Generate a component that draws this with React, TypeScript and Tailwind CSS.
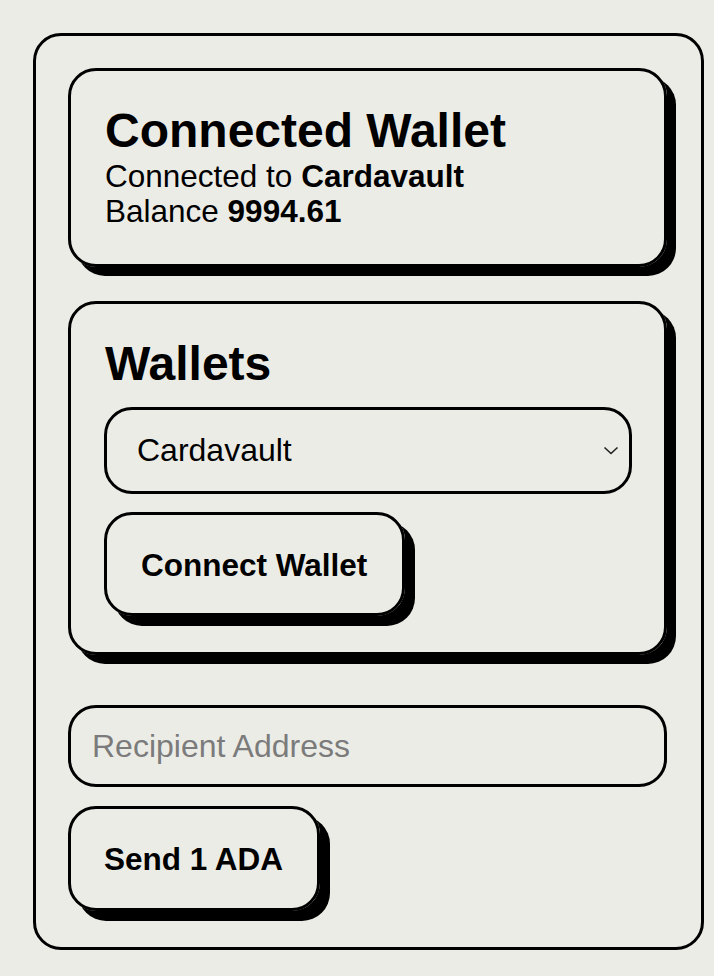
import React from "react";

export default function App() {
  return (
    <div
      className="min-h-[976px] w-full bg-[#ecece7] pt-[33px] pl-[33px] text-black"
      style={{ fontFamily: '"Liberation Sans", Arial, Helvetica, sans-serif' }}
    >
      <div className="w-[671px] h-[917px] rounded-[28px] border-[3px] border-black pt-[32px] pl-[32px] pr-[34px] flex flex-col">
        {/* Connected wallet card */}
        <div className="rounded-[28px] border-[3px] border-black shadow-[9px_9px_0_0_#000] pt-[32px] pb-[35px] pl-[34px] pr-[32px]">
          <h2 className="text-[48px] leading-[56px] font-bold">Connected Wallet</h2>
          <div className="text-[31.5px] leading-[35px]">
            <p>
              Connected to <span className="font-bold">Cardavault</span>
            </p>
            <p>
              Balance <span className="font-bold">9994.61</span>
            </p>
          </div>
        </div>

        {/* Wallets card */}
        <div className="mt-[34px] rounded-[28px] border-[3px] border-black shadow-[9px_9px_0_0_#000] pt-[32px] pb-[36px] pl-[33px] pr-[32px] flex flex-col items-start">
          <h2 className="text-[48px] leading-[56px] font-bold pl-[1px]">Wallets</h2>
          <div className="mt-[15px] w-full h-[87px] rounded-[28px] border-[3px] border-black flex items-center justify-between pl-[30px] pr-[8px]">
            <span className="text-[32px] leading-[37px]">Cardavault</span>
            <svg width="18" height="11" viewBox="0 0 18 11" className="mr-[1px]">
              <path d="M2.5 2.5 L9 8.5 L15.5 2.5" fill="none" stroke="#222" strokeWidth="1.6" />
            </svg>
          </div>
          <button className="mt-[18px] h-[104px] rounded-[28px] border-[3px] border-black shadow-[10px_10px_0_0_#000] pl-[34px] pr-[35px] pt-[2px] text-[31.5px] leading-[37px] font-bold">
            Connect Wallet
          </button>
        </div>

        {/* Recipient input */}
        <div className="mt-[50px] w-full h-[82px] rounded-[28px] border-[3px] border-black flex items-center pl-[21px]">
          <span className="text-[32px] leading-[37px] text-[#7b7b7b]">Recipient Address</span>
        </div>

        <div className="mt-[19px]">
          <button className="h-[105px] rounded-[28px] border-[3px] border-black shadow-[10px_10px_0_0_#000] pl-[33px] pr-[34px] pt-[2px] text-[31.5px] leading-[37px] font-bold">
            Send 1 ADA
          </button>
        </div>
      </div>
    </div>
  );
}
